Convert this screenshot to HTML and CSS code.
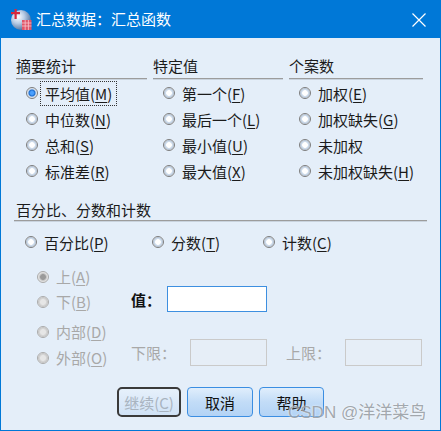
FILE: index.html
```html
<!DOCTYPE html>
<html lang="zh-CN">
<head>
<meta charset="utf-8">
<title>汇总数据：汇总函数</title>
<link rel="stylesheet" href="styles.css">
</head>
<body>
<div class="window">
  <div class="titlebar">
    <svg class="app-icon" width="24" height="24" viewBox="0 0 24 24">
      <defs>
        <radialGradient id="globe" cx="0.35" cy="0.35" r="0.7">
          <stop offset="0" stop-color="#ffffff"/>
          <stop offset="0.45" stop-color="#b9cde6"/>
          <stop offset="1" stop-color="#4d6f9c"/>
        </radialGradient>
      </defs>
      <circle cx="12" cy="12" r="10" fill="url(#globe)"/>
      <rect x="5.5" y="1" width="2.2" height="10" fill="#d8283c"/>
      <rect x="2" y="4" width="9" height="2.2" fill="#d8283c"/>
      <rect x="13" y="12" width="9.5" height="10" fill="#e0566a"/>
      <path d="M13 15h9.5M13 18h9.5M16.2 12v10M19.4 12v10" stroke="#f6c5cd" stroke-width="0.8"/>
    </svg>
    <span class="title">汇总数据：汇总函数</span>
    <svg class="close" width="14" height="14" viewBox="0 0 14 14">
      <path d="M0.5 0.5L13.5 13.5M13.5 0.5L0.5 13.5" stroke="#ffffff" stroke-width="1.2"/>
    </svg>
  </div>

  <div class="content">
    <div class="groups">
      <section class="group">
        <div class="group-head">摘要统计</div>
        <ul class="radios">
          <li class="opt"><span class="radio checked"></span><span class="label focus">平均值(<u>M</u>)</span></li>
          <li class="opt"><span class="radio"></span><span class="label">中位数(<u>N</u>)</span></li>
          <li class="opt"><span class="radio"></span><span class="label">总和(<u>S</u>)</span></li>
          <li class="opt"><span class="radio"></span><span class="label">标准差(<u>R</u>)</span></li>
        </ul>
      </section>
      <section class="group">
        <div class="group-head">特定值</div>
        <ul class="radios">
          <li class="opt"><span class="radio"></span><span class="label">第一个(<u>F</u>)</span></li>
          <li class="opt"><span class="radio"></span><span class="label">最后一个(<u>L</u>)</span></li>
          <li class="opt"><span class="radio"></span><span class="label">最小值(<u>U</u>)</span></li>
          <li class="opt"><span class="radio"></span><span class="label">最大值(<u>X</u>)</span></li>
        </ul>
      </section>
      <section class="group">
        <div class="group-head">个案数</div>
        <ul class="radios">
          <li class="opt"><span class="radio"></span><span class="label">加权(<u>E</u>)</span></li>
          <li class="opt"><span class="radio"></span><span class="label">加权缺失(<u>G</u>)</span></li>
          <li class="opt"><span class="radio"></span><span class="label">未加权</span></li>
          <li class="opt"><span class="radio"></span><span class="label">未加权缺失(<u>H</u>)</span></li>
        </ul>
      </section>
    </div>

    <section class="pct">
      <div class="group-head wide">百分比、分数和计数</div>
      <div class="pct-row">
        <div class="opt pct-opt first"><span class="radio"></span><span class="label">百分比(<u>P</u>)</span></div>
        <div class="opt pct-opt second"><span class="radio"></span><span class="label">分数(<u>T</u>)</span></div>
        <div class="opt pct-opt"><span class="radio"></span><span class="label">计数(<u>C</u>)</span></div>
      </div>
    </section>

    <div class="range">
      <ul class="radios disabled">
        <li class="opt r-row"><span class="radio checked"></span><span class="label">上(<u>A</u>)</span></li>
        <li class="opt r-row"><span class="radio"></span><span class="label">下(<u>B</u>)</span></li>
        <li class="opt r-row third"><span class="radio"></span><span class="label">内部(<u>D</u>)</span></li>
        <li class="opt r-row fourth"><span class="radio"></span><span class="label">外部(<u>O</u>)</span></li>
      </ul>
      <div class="fields">
        <div class="value-row">
          <span class="value-label">值：</span>
          <span class="input active"></span>
        </div>
        <div class="limit-row">
          <span class="limit-label">下限：</span>
          <span class="input off"></span>
          <span class="limit-label upper">上限：</span>
          <span class="input off"></span>
        </div>
      </div>
    </div>

    <div class="buttons">
      <button class="btn default" disabled>继续(<u>C</u>)</button>
      <button class="btn cancel">取消</button>
      <button class="btn help">帮助</button>
    </div>
  </div>
  <div class="watermark">CSDN @洋洋菜鸟</div>
</div>
</body>
</html>
```

FILE: styles.css
```css
* { box-sizing: border-box; }

html, body {
  margin: 0;
  padding: 0;
  background: #e4eef9;
}

body {
  font-family: "Noto Sans CJK SC", "Microsoft YaHei", sans-serif;
  font-size: 15px;
  color: #1b1b1b;
}

.window {
  position: relative;
  width: 441px;
  height: 431px;
  background: #e4eef9;
  display: flex;
  flex-direction: column;
}

.titlebar {
  height: 38px;
  background: #0078d7;
  display: flex;
  align-items: center;
  flex: none;
}

.app-icon {
  margin-left: 9px;
  margin-top: 1px;
  flex: none;
}

.title {
  color: #ffffff;
  font-size: 15px;
  line-height: 20px;
  margin-left: 3px;
  flex: 1;
}

.close {
  margin-right: 15px;
  margin-top: 2px;
  flex: none;
}

.content {
  flex: 1;
  border: 1px solid #0078d7;
  border-top: none;
  padding: 18px 0 0 15px;
}

ul { list-style: none; margin: 0; padding: 0; }

.groups {
  display: grid;
  grid-template-columns: 131px 130px 134px;
  column-gap: 6px;
}

.group-head {
  font-size: 15px;
  line-height: 20px;
  padding-bottom: 2px;
  border-bottom: 1px solid #9c9c9c;
  box-shadow: 0 1px 0 #c9d3de;
  white-space: nowrap;
}

.group .radios {
  margin-top: 1px;
  padding-left: 10px;
}

.opt {
  display: flex;
  align-items: center;
  height: 26px;
  white-space: nowrap;
}

.radio {
  width: 12px;
  height: 12px;
  border-radius: 50%;
  border: 1px solid #7d7d7d;
  background: radial-gradient(circle, #ffffff 0 2.5px, #dbe6f2 3px, #b9c9dc 4.5px, #eef3f8 5px);
  flex: none;
}

.radio.checked {
  background: radial-gradient(circle, #4aa0ff 0 1.5px, #1f6fd0 3px, #c6d6ea 4px, #eef3f8 5px);
}

.label {
  margin-left: 2px;
  padding: 0 4px;
  line-height: 23px;
  border: 1px dotted transparent;
}

.label.focus {
  border-color: #333333;
}

u {
  text-decoration: underline;
  text-underline-offset: 2px;
  text-decoration-thickness: 1px;
}

.pct {
  margin-top: 16px;
}

.group-head.wide {
  width: 413px;
  margin-left: -2px;
  padding-left: 2px;
  padding-bottom: 0;
}

.pct-row {
  display: flex;
  margin-top: 8px;
  padding-left: 9px;
}

.pct-opt.first { width: 127px; }
.pct-opt.second { width: 111px; }

.range {
  display: flex;
  margin-top: 9px;
  align-items: flex-start;
}

.radios.disabled {
  width: 115px;
  padding-left: 21px;
  color: #a8a8a8;
}

.radios.disabled .radio {
  border-color: #aaaaaa;
  background: radial-gradient(circle, #e6e6e6 0 2.5px, #dcdcdc 3px, #c8c8c8 4.5px, #ececec 5px);
}

.radios.disabled .radio.checked {
  background: radial-gradient(circle, #9a9a9a 0 2.5px, #b5b5b5 3px, #d8d8d8 4px, #ececec 5px);
}

.radios.disabled u { text-decoration-color: #a8a8a8; }

.r-row { height: 25px; }
.r-row.third { margin-top: 5px; }
.r-row.fourth { margin-top: 1px; }

.fields {
  padding-top: 22px;
}

.value-row {
  display: flex;
  align-items: center;
  height: 26px;
}

.value-label {
  width: 36px;
  font-weight: bold;
  color: #111111;
}

.input {
  display: block;
  height: 26px;
  width: 100px;
  flex: none;
}

.input.active {
  background: #ffffff;
  border: 1px solid #3d8fe0;
}

.limit-row {
  display: flex;
  align-items: center;
  margin-top: 27px;
  height: 27px;
}

.limit-label {
  width: 59px;
  color: #a8a8a8;
  flex: none;
}

.limit-label.upper {
  margin-left: 19px;
}

.input.off {
  width: 77px;
  height: 27px;
  border: 1px solid #cacaca;
  background: #e6eef7;
}

.buttons {
  display: flex;
  gap: 6px;
  margin-top: 17px;
  padding-left: 101px;
}

.btn {
  height: 30px;
  padding: 0;
  font-family: inherit;
  font-size: 15px;
  color: #111111;
  border: 1px solid #3b8ee2;
  border-radius: 4px;
  background: linear-gradient(#e0eefc, #c2dcf7 50%, #b3d3f5);
}

.btn.default {
  width: 64px;
  color: #a9b4c0;
  border: 2px solid #3a3a3a;
  border-radius: 5px;
  background: linear-gradient(#e6f0fb, #d0e2f6);
}

.btn.default u { text-decoration-color: #a9b4c0; }

.btn.cancel { width: 66px; }
.btn.help { width: 65px; }

.watermark {
  position: absolute;
  left: 288px;
  top: 402px;
  font-size: 17px;
  line-height: 22px;
  color: rgba(140, 146, 152, 0.8);
  text-shadow: 0 0 2px rgba(255, 255, 255, 0.9);
  white-space: nowrap;
  font-family: "Liberation Sans", "Noto Sans CJK SC", sans-serif;
}
```
